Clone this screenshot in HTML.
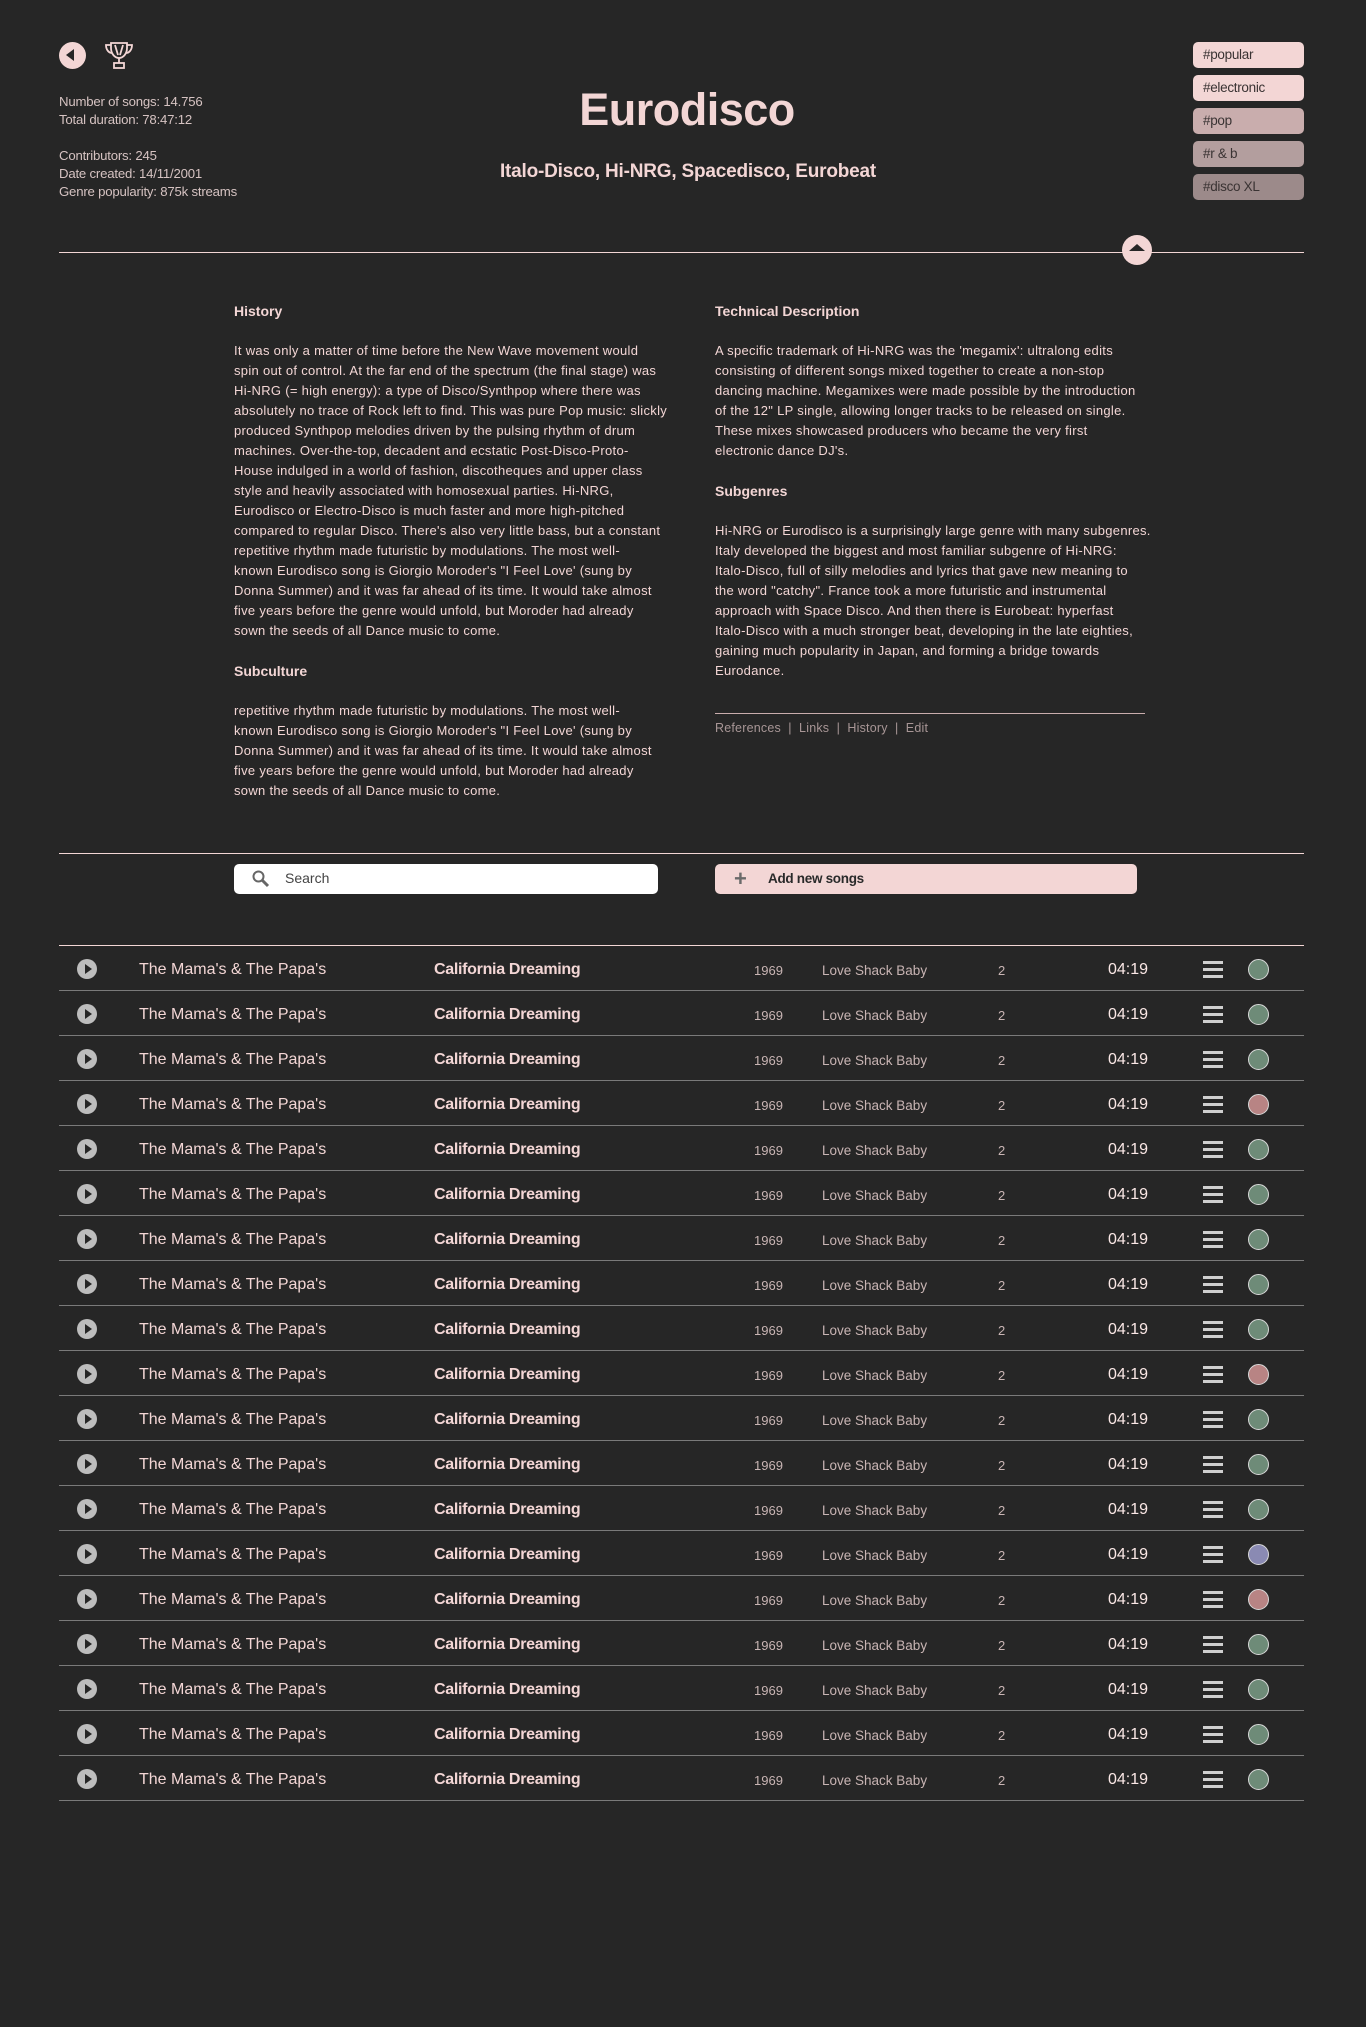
<!DOCTYPE html>
<html><head><meta charset="utf-8">
<style>
*{margin:0;padding:0;box-sizing:border-box}
body{width:1366px;height:2027px;background:#262626;font-family:"Liberation Sans",sans-serif;color:#f3d6d5;position:relative;overflow:hidden}
.abs{position:absolute}
.info{left:59px;top:93px;font-size:13.2px;line-height:18px;color:#d6c3c2;letter-spacing:-0.2px}
h1{position:absolute;left:0;width:1366px;text-align:center;top:84px;font-size:45px;font-weight:bold;color:#f3d6d5;letter-spacing:-0.5px;padding-left:8px}
.sub{left:0;width:1366px;text-align:center;top:161px;font-size:19px;font-weight:bold;letter-spacing:-0.2px;padding-left:10px}
.tag{position:absolute;left:1193px;width:111px;height:26px;border-radius:5px;font-size:13.5px;color:#3a3333;padding:5px 0 0 10px;letter-spacing:-0.3px}
.line{position:absolute;left:59px;width:1245px;height:1px;background:#f3d6d5}
.col{position:absolute;width:470px;font-size:13px;line-height:20px;color:#f3d6d5;white-space:nowrap;letter-spacing:0.3px}
.col h3{font-size:14px;font-weight:bold;margin-bottom:20px;line-height:20px;letter-spacing:0}
.col p{margin-bottom:20px}
.row{position:absolute;left:59px;width:1245px;height:45px;border-bottom:1px solid #7a7a7a}
.row span{position:absolute;top:15px;white-space:nowrap}
.play{position:absolute;left:18px;top:13px;width:20px;height:20px;border-radius:50%;background:#bdbdbd}
.play:after{content:"";position:absolute;left:8px;top:5px;border-left:7px solid #262626;border-top:5px solid transparent;border-bottom:5px solid transparent}
.a{left:80px;font-size:16px;color:#f3d6d5}
.t{left:375px;font-size:16px;font-weight:bold;letter-spacing:-0.3px}
.y{left:695px;font-size:13px;color:#c9b5b4;top:17px!important}
.al{left:763px;font-size:13.5px;color:#c9b5b4;top:17px!important}
.n{left:939px;font-size:13px;color:#c9b5b4;top:17px!important}
.d{left:1049px;font-size:16px;color:#fbe8e6}
.m{position:absolute;left:1144px;top:15px;width:20px}
.m i{display:block;height:3px;background:#cfcfcf;margin-bottom:4px}
.dot{position:absolute;left:1189px;top:13px;width:21px;height:21px;border-radius:50%;border:1px solid #d8d8d8;background:#6e8b78}
</style></head><body>
<div class="abs" style="left:59px;top:42px;width:27px;height:27px;border-radius:50%;background:#f3d6d5"></div>
<div class="abs" style="left:66px;top:49px;border-right:8px solid #262626;border-top:6.5px solid transparent;border-bottom:6.5px solid transparent"></div>
<svg class="abs" style="left:104px;top:41px" width="30" height="29" viewBox="0 0 30 29" fill="none" stroke="#f3d6d5" stroke-width="1.8"><path d="M7 2h16v5c0 6-4 10-8 10s-8-4-8-10z"/><path d="M7 4H2c0 5 3 8 6 8M23 4h5c0 5-3 8-6 8"/><path d="M11 4l3 10M19 4l-3 10"/><path d="M15 17v5"/><rect x="10" y="22" width="10" height="5"/></svg>
<div class="abs info">Number of songs: 14.756<br>Total duration: 78:47:12<br><div style="height:18px"></div>Contributors: 245<br>Date created: 14/11/2001<br>Genre popularity: 875k streams</div>
<h1>Eurodisco</h1>
<div class="abs sub">Italo-Disco, Hi-NRG, Spacedisco, Eurobeat</div>
<div class="tag" style="top:42px;background:#f3d6d5">#popular</div>
<div class="tag" style="top:75px;background:#f3d6d5">#electronic</div>
<div class="tag" style="top:108px;background:#c9adad">#pop</div>
<div class="tag" style="top:141px;background:#b39e9e">#r &amp; b</div>
<div class="tag" style="top:174px;background:#9c8a8a">#disco XL</div>
<div class="line" style="top:252px"></div>
<div class="abs" style="left:1122px;top:235px;width:30px;height:30px;border-radius:50%;background:#f3d6d5"></div>
<div class="abs" style="left:1129px;top:244px;border-bottom:7px solid #262626;border-left:8px solid transparent;border-right:8px solid transparent"></div>

<div class="col" style="left:234px;top:301px">
<h3>History</h3>
<p>It was only a matter of time before the New Wave movement would<br>spin out of control. At the far end of the spectrum (the final stage) was<br>Hi-NRG (= high energy): a type of Disco/Synthpop where there was<br>absolutely no trace of Rock left to find. This was pure Pop music: slickly<br>produced Synthpop melodies driven by the pulsing rhythm of drum<br>machines. Over-the-top, decadent and ecstatic Post-Disco-Proto-<br>House indulged in a world of fashion, discotheques and upper class<br>style and heavily associated with homosexual parties. Hi-NRG,<br>Eurodisco or Electro-Disco is much faster and more high-pitched<br>compared to regular Disco. There's also very little bass, but a constant<br>repetitive rhythm made futuristic by modulations. The most well-<br>known Eurodisco song is Giorgio Moroder's "I Feel Love' (sung by<br>Donna Summer) and it was far ahead of its time. It would take almost<br>five years before the genre would unfold, but Moroder had already<br>sown the seeds of all Dance music to come.</p>
<h3>Subculture</h3>
<p>repetitive rhythm made futuristic by modulations. The most well-<br>known Eurodisco song is Giorgio Moroder's "I Feel Love' (sung by<br>Donna Summer) and it was far ahead of its time. It would take almost<br>five years before the genre would unfold, but Moroder had already<br>sown the seeds of all Dance music to come.</p>
</div>
<div class="col" style="left:715px;top:301px">
<h3>Technical Description</h3>
<p>A specific trademark of Hi-NRG was the 'megamix': ultralong edits<br>consisting of different songs mixed together to create a non-stop<br>dancing machine. Megamixes were made possible by the introduction<br>of the 12" LP single, allowing longer tracks to be released on single.<br>These mixes showcased producers who became the very first<br>electronic dance DJ's.</p>
<h3>Subgenres</h3>
<p>Hi-NRG or Eurodisco is a surprisingly large genre with many subgenres.<br>Italy developed the biggest and most familiar subgenre of Hi-NRG:<br>Italo-Disco, full of silly melodies and lyrics that gave new meaning to<br>the word "catchy". France took a more futuristic and instrumental<br>approach with Space Disco. And then there is Eurobeat: hyperfast<br>Italo-Disco with a much stronger beat, developing in the late eighties,<br>gaining much popularity in Japan, and forming a bridge towards<br>Eurodance.</p>
</div>
<div class="abs" style="left:715px;top:713px;width:430px;height:1px;background:#c9adad"></div>
<div class="abs" style="left:715px;top:721px;font-size:12.5px;color:#a89696;letter-spacing:0.2px">References &nbsp;|&nbsp; Links &nbsp;|&nbsp; History &nbsp;|&nbsp; Edit</div>

<div class="line" style="top:853px"></div>
<div class="abs" style="left:234px;top:864px;width:424px;height:30px;border-radius:5px;background:#fff"></div>
<svg class="abs" style="left:251px;top:869px" width="20" height="20" viewBox="0 0 20 20" fill="none" stroke="#666" stroke-width="2"><circle cx="7.5" cy="7.5" r="5"/><path d="M11 11l6 6" stroke-width="3"/></svg>
<div class="abs" style="left:285px;top:870px;font-size:14px;color:#444">Search</div>
<div class="abs" style="left:715px;top:864px;width:422px;height:30px;border-radius:5px;background:#f3d6d5"></div>
<div class="abs" style="left:734px;top:866px;font-size:22px;color:#6a6a6a;font-weight:bold">+</div>
<div class="abs" style="left:768px;top:871px;font-size:13.5px;color:#2a2a2a;font-weight:bold;letter-spacing:-0.3px">Add new songs</div>
<div class="line" style="top:945px"></div>
<div id="rows"></div>
<script>
var c=["#6e8b78","#6e8b78","#6e8b78","#b88484","#6e8b78","#6e8b78","#6e8b78","#6e8b78","#6e8b78","#b88484","#6e8b78","#6e8b78","#6e8b78","#8a8ab3","#b88484","#6e8b78","#6e8b78","#6e8b78","#6e8b78"];
var h="";for(var i=0;i<19;i++){h+='<div class="row" style="top:'+(946+i*45)+'px"><div class="play"></div><span class="a">The Mama\'s &amp; The Papa\'s</span><span class="t">California Dreaming</span><span class="y">1969</span><span class="al">Love Shack Baby</span><span class="n">2</span><span class="d">04:19</span><div class="m"><i></i><i></i><i></i></div><div class="dot" style="background:'+c[i]+'"></div></div>';}
document.getElementById("rows").innerHTML=h;
</script>
</body></html>
